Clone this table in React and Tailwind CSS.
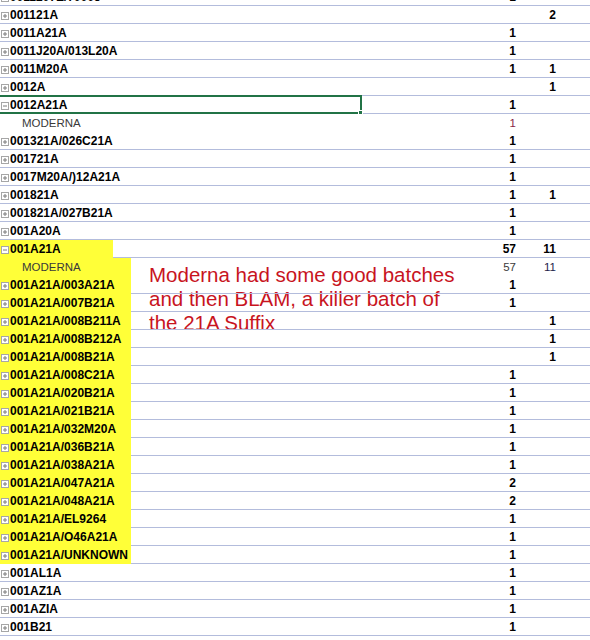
import React from 'react';

// Pivot rows: a = first value column, b = second value column.
// hl: 'narrow' | 'wide' yellow marker on the label cell.
const ROWS = [
  { label: '0011207E/70005', a: '1' },
  { label: '001121A', b: '2' },
  { label: '0011A21A', a: '1' },
  { label: '0011J20A/013L20A', a: '1' },
  { label: '0011M20A', a: '1', b: '1' },
  { label: '0012A', b: '1' },
  { label: '0012A21A', a: '1', open: true, selected: true },
  { label: 'MODERNA', a: '1', child: true, aColor: 'text-[#8a1f45]' },
  { label: '001321A/026C21A', a: '1' },
  { label: '001721A', a: '1' },
  { label: '0017M20A/)12A21A', a: '1' },
  { label: '001821A', a: '1', b: '1' },
  { label: '001821A/027B21A', a: '1' },
  { label: '001A20A', a: '1' },
  { label: '001A21A', a: '57', b: '11', open: true, hl: 'narrow' },
  { label: 'MODERNA', a: '57', b: '11', child: true, hl: 'wide', note: true, aColor: 'text-[#3b3b3b]', bColor: 'text-[#23234a]' },
  { label: '001A21A/003A21A', a: '1', hl: 'wide' },
  { label: '001A21A/007B21A', a: '1', hl: 'wide' },
  { label: '001A21A/008B211A', b: '1', hl: 'wide' },
  { label: '001A21A/008B212A', b: '1', hl: 'wide' },
  { label: '001A21A/008B21A', b: '1', hl: 'wide' },
  { label: '001A21A/008C21A', a: '1', hl: 'wide' },
  { label: '001A21A/020B21A', a: '1', hl: 'wide' },
  { label: '001A21A/021B21A', a: '1', hl: 'wide' },
  { label: '001A21A/032M20A', a: '1', hl: 'wide' },
  { label: '001A21A/036B21A', a: '1', hl: 'wide' },
  { label: '001A21A/038A21A', a: '1', hl: 'wide' },
  { label: '001A21A/047A21A', a: '2', hl: 'wide' },
  { label: '001A21A/048A21A', a: '2', hl: 'wide' },
  { label: '001A21A/EL9264', a: '1', hl: 'wide' },
  { label: '001A21A/O46A21A', a: '1', hl: 'wide' },
  { label: '001A21A/UNKNOWN', a: '1', hl: 'wide' },
  { label: '001AL1A', a: '1' },
  { label: '001AZ1A', a: '1' },
  { label: '001AZIA', a: '1' },
  { label: '001B21', a: '1' },
  { label: '001B21A/002B21A', a: '1' },
];

function Toggle({ open }) {
  return (
    <svg width="8" height="8" viewBox="0 0 8 8" className="ml-[1px] mr-[1px] shrink-0">
      <rect x="0.5" y="0.5" width="7" height="7" fill="#fff" stroke="#a6a6a6" />
      <path d="M2 4h4" stroke="#7a7a7a" />
      {!open && <path d="M4 2v4" stroke="#7a7a7a" />}
    </svg>
  );
}

function Row({ r }) {
  const line = r.child ? 'border-b-transparent' : 'border-b-[#b3bcdc]';
  const hlCell = r.hl ? 'bg-[#ffff38] border-b-[#ffff38]' : line;
  const weight = r.child ? 'font-normal text-[11.5px]' : 'font-bold text-[12px]';

  return (
    <div className="relative flex h-[18px]">
      <div className={`${r.hl === 'narrow' ? 'w-[113px]' : 'w-[131px]'} shrink-0 border-b ${hlCell}`}>
        <div className="flex items-center pt-[2px] leading-[15px] whitespace-nowrap">
          {r.child ? (
            <span className="ml-[22px] text-[11.5px] text-[#3a3a3a]">{r.label}</span>
          ) : (
            <>
              <Toggle open={r.open} />
              <span className="text-[12px] font-bold text-black">{r.label}</span>
            </>
          )}
        </div>
      </div>
      <div className={`flex-1 border-b ${line}`} />
      <div className={`w-[26px] shrink-0 border-b ${line} pt-[2px] text-right leading-[15px] ${weight} ${r.aColor || 'text-black'}`}>
        {r.a}
      </div>
      <div className={`w-[40px] shrink-0 border-b ${line} pt-[2px] text-right leading-[15px] ${weight} ${r.bColor || 'text-black'}`}>
        {r.b}
      </div>
      <div className={`w-[34px] shrink-0 border-b ${line}`} />

      {r.selected && (
        <div className="absolute left-[-2px] top-[-1px] h-[19px] w-[364px] border-2 border-[#217346]">
          <div className="absolute bottom-[-3px] right-[-3px] h-[5px] w-[5px] border border-white bg-[#217346]" />
        </div>
      )}

      {r.note && (
        <div className="absolute left-[149px] top-[5px] whitespace-pre text-[20.5px] leading-[24px] text-[#c8141e]">
          {'Moderna had some good batches\nand then BLAM, a killer batch of\nthe 21A Suffix'}
        </div>
      )}
    </div>
  );
}

export default function App() {
  return (
    <div className="h-[640px] w-[590px] overflow-hidden bg-white font-['Liberation_Sans',Arial,sans-serif]">
      <div className="-mt-[12px]">
        {ROWS.map((r, i) => (
          <Row key={i} r={r} />
        ))}
      </div>
    </div>
  );
}
